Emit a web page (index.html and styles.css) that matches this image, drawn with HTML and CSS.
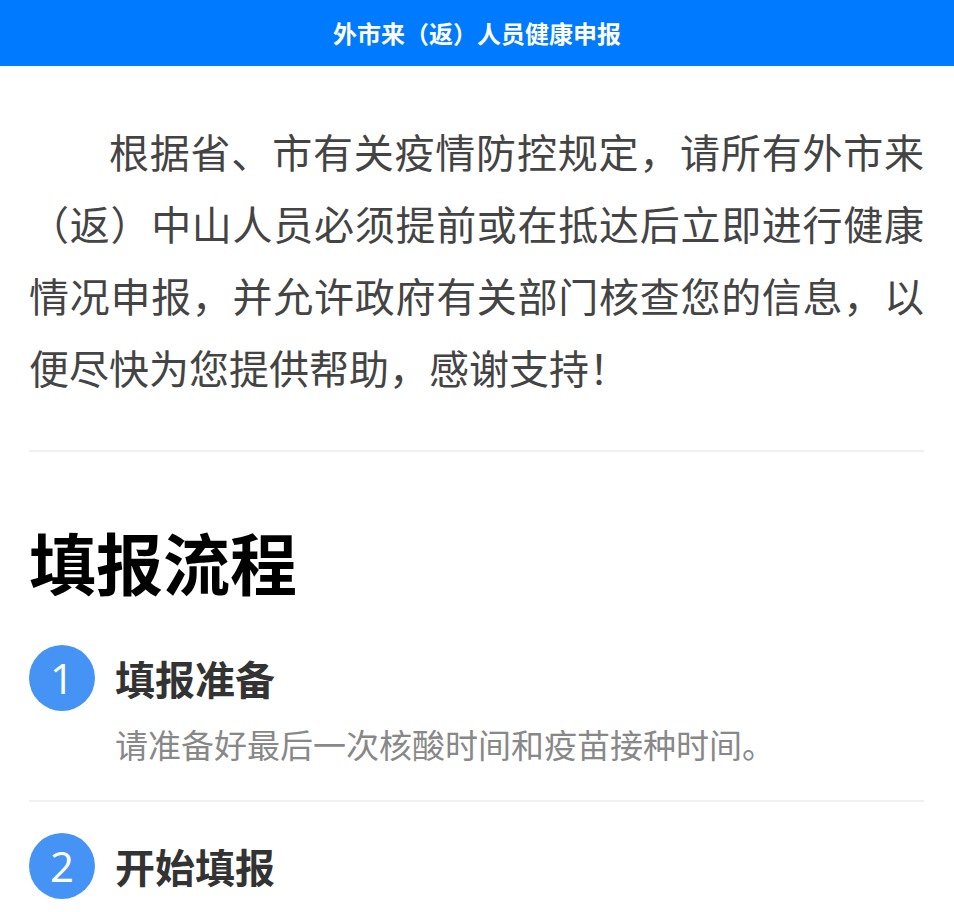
FILE: index.html
```html
<!DOCTYPE html>
<html lang="zh-CN">
<head>
  <meta charset="UTF-8">
  <title>外市来（返）人员健康申报</title>
  <meta name="viewport" content="width=device-width, initial-scale=1.0">
  <link rel="stylesheet" href="styles.css">
</head>
<body>

<header class="top-bar">外市来（返）人员健康申报</header>

<main class="page">
  <p class="notice">根据省、市有关疫情防控规定，请所有外市来（返）中山人员必须提前或在抵达后立即进行健康情况申报，并允许政府有关部门核查您的信息，以便尽快为您提供帮助，感谢支持！</p>

  <hr class="divider">

  <h2 class="section-title">填报流程</h2>

  <ol class="steps">
    <li class="step">
      <span class="step-num">1</span>
      <div class="step-body">
        <div class="step-title">填报准备</div>
        <div class="step-desc">请准备好最后一次核酸时间和疫苗接种时间。</div>
      </div>
    </li>
    <li class="step">
      <span class="step-num">2</span>
      <div class="step-body">
        <div class="step-title">开始填报</div>
      </div>
    </li>
  </ol>
</main>

</body>
</html>
```

FILE: styles.css
```css
body { margin: 0; font-family: "Noto Sans CJK SC", sans-serif; background: #fff; color: #444; }
.top-bar { height: 66px; line-height: 66px; background: #007aff; color: #fff; text-align: center; font-size: 24px; font-weight: bold; }
.page { padding: 0 30px 0 29px; }
.notice { margin: 49px 0 47px; font-size: 40px; line-height: 72px; text-indent: 2em; text-align: justify; color: #444; }
.divider { margin: 0; border: 0; border-top: 2px solid #f0f0f0; }
.section-title { margin: 59px 0 3px; font-size: 67px; line-height: 100px; font-weight: bold; color: #000; }
.steps { list-style: none; margin: 0; padding: 0; }
.step { display: flex; gap: 20px; padding: 31px 0 23px; border-bottom: 2px solid #f0f0f0; }
.step:last-child { border-bottom: 0; }
.step-num { flex: none; width: 66px; height: 66px; border-radius: 50%; background: #4594f5; color: #fff; font-family: "Open Sans", sans-serif; font-weight: 400; font-size: 42px; line-height: 66px; text-align: center; }
.step-title { font-size: 40px; line-height: 66px; font-weight: bold; color: #333; }
.step-desc { font-size: 33px; line-height: 66px; color: #888; }
```
